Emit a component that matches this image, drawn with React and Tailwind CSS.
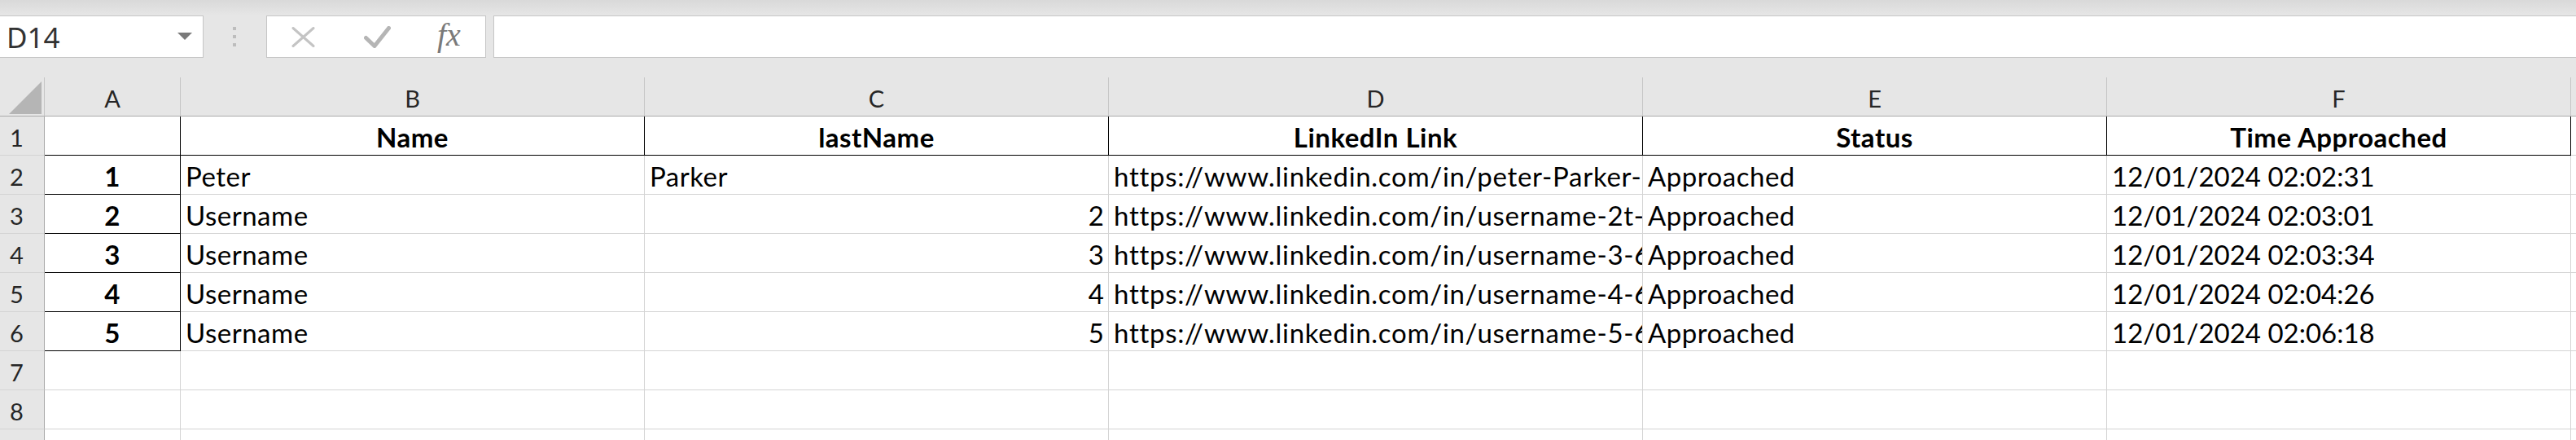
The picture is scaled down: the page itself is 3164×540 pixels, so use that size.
import React from "react";

const GRID = "grid grid-cols-[55px_167px_570px_570px_656px_570px_570px_1fr]";
const LETTERS = ["A", "B", "C", "D", "E", "F"];

const rows = [
  [
    { t: "", br: true, bb: true },
    { t: "Name", bold: true, align: "center", br: true, bb: true },
    { t: "lastName", bold: true, align: "center", br: true, bb: true },
    { t: "LinkedIn Link", bold: true, align: "center", br: true, bb: true },
    { t: "Status", bold: true, align: "center", br: true, bb: true },
    { t: "Time Approached", bold: true, align: "center", br: true, bb: true },
  ],
  [
    { t: "1", bold: true, align: "center", br: true, bb: true },
    { t: "Peter" },
    { t: "Parker" },
    { t: "https://www.linkedin.com/in/peter-Parker-a1b2c3d4e5/", wide: true },
    { t: "Approached" },
    { t: "12/01/2024 02:02:31", num: true },
  ],
  [
    { t: "2", bold: true, align: "center", br: true, bb: true },
    { t: "Username" },
    { t: "2", align: "right", num: true },
    { t: "https://www.linkedin.com/in/username-2t-6a7b8c9d/", wide: true },
    { t: "Approached" },
    { t: "12/01/2024 02:03:01", num: true },
  ],
  [
    { t: "3", bold: true, align: "center", br: true, bb: true },
    { t: "Username" },
    { t: "3", align: "right", num: true },
    { t: "https://www.linkedin.com/in/username-3-6b1c2d3e/", wide: true },
    { t: "Approached" },
    { t: "12/01/2024 02:03:34", num: true },
  ],
  [
    { t: "4", bold: true, align: "center", br: true, bb: true },
    { t: "Username" },
    { t: "4", align: "right", num: true },
    { t: "https://www.linkedin.com/in/username-4-6c2d3e4f/", wide: true },
    { t: "Approached" },
    { t: "12/01/2024 02:04:26", num: true },
  ],
  [
    { t: "5", bold: true, align: "center", br: true, bb: true },
    { t: "Username" },
    { t: "5", align: "right", num: true },
    { t: "https://www.linkedin.com/in/username-5-6d3e4f5a/", wide: true },
    { t: "Approached" },
    { t: "12/01/2024 02:06:18", num: true },
  ],
  [{}, {}, {}, {}, {}, {}],
  [{}, {}, {}, {}, {}, {}],
  [{}, {}, {}, {}, {}, {}],
];

function FormulaBar() {
  return (
    <div className="h-[95px]">
      <div className="h-[19px] bg-linear-to-b from-[#d9d9d9] to-[#e6e6e6]" />
      <div className="flex h-[52px] items-stretch">
        {/* name box */}
        <div className="relative flex w-[250px] items-center border border-l-0 border-[#c6c6c6] bg-white pl-[8px]">
          <span className="font-['Noto_Sans',sans-serif] text-[35px] leading-none text-[#333]">
            D14
          </span>
          <svg
            className="absolute left-[218px] top-[20px]"
            width="18"
            height="9"
            viewBox="0 0 18 9"
          >
            <path d="M0 0 H18 L9 9 Z" fill="#7a7a7a" />
          </svg>
        </div>

        {/* grip dots */}
        <div className="flex w-[77px] flex-col items-center justify-center gap-[6px] pr-[2px]">
          <span className="h-[4px] w-[4px] bg-[#bdbdbd]" />
          <span className="h-[4px] w-[4px] bg-[#bdbdbd]" />
          <span className="h-[4px] w-[4px] bg-[#bdbdbd]" />
        </div>

        {/* cancel / enter / fx */}
        <div className="flex w-[270px] items-center border border-[#c6c6c6] bg-white">
          <svg className="ml-[30px]" width="29" height="25" viewBox="0 0 29 25">
            <path
              d="M2 1.5 L27 23.5 M27 1.5 L2 23.5"
              stroke="#c4c4c4"
              strokeWidth="3"
              strokeLinecap="round"
              fill="none"
            />
          </svg>
          <svg className="ml-[60px]" width="33" height="27" viewBox="0 0 33 27">
            <path
              d="M2.5 14.5 L13 24.5 L30.5 2.5"
              stroke="#b5b5b5"
              strokeWidth="5"
              strokeLinecap="round"
              strokeLinejoin="round"
              fill="none"
            />
          </svg>
          <span className="ml-[57px] mt-[-4px] font-['Liberation_Serif',serif] text-[40px] italic leading-none text-[#7a7a7a]">
            fx
          </span>
        </div>

        {/* formula input */}
        <div className="ml-[9px] flex-1 border border-r-0 border-[#c6c6c6] bg-white" />
      </div>
      <div className="h-[24px]" />
    </div>
  );
}

function HeaderRow() {
  return (
    <div className={`${GRID} h-[48px]`}>
      <div className="relative border-r border-b border-[#ababab] border-r-[#c6c6c6]">
        <svg className="absolute left-[11px] top-[5px]" width="40" height="40" viewBox="0 0 40 40">
          <path d="M0 40 H40 V0 Z" fill="#b5b5b5" />
        </svg>
      </div>
      {LETTERS.map((l) => (
        <div
          key={l}
          className="flex items-end justify-center border-r border-b border-r-[#c6c6c6] border-b-[#ababab] pb-[3px] text-[29px] leading-[36px] text-[#262626]"
        >
          {l}
        </div>
      ))}
      <div className="border-b border-[#ababab]" />
    </div>
  );
}

function Cell({ cell }) {
  const align =
    cell.align === "center"
      ? "justify-center"
      : cell.align === "right"
      ? "justify-end pr-[5px]"
      : "justify-start pl-[6px]";
  const track = cell.num ? "" : cell.wide ? "tracking-[0.7px]" : "tracking-[0.5px]";
  return (
    <div
      className={`flex items-end overflow-hidden whitespace-nowrap border-r border-b bg-white pb-[2px] text-[33px] leading-[40px] text-black ${align} ${track} ${
        cell.bold ? "font-bold" : ""
      } ${cell.br ? "border-r-black" : "border-r-[#d4d4d4]"} ${
        cell.bb ? "border-b-black" : "border-b-[#d4d4d4]"
      }`}
    >
      {cell.t}
    </div>
  );
}

export default function App() {
  return (
    <div className="h-[540px] w-full overflow-hidden bg-[#e6e6e6] font-['Lato',sans-serif]">
      <FormulaBar />
      <HeaderRow />
      {rows.map((r, i) => (
        <div key={i} className={`${GRID} h-[48px]`}>
          <div className="flex items-end border-r border-b border-r-[#ababab] border-b-[#d4d4d4] bg-[#e6e6e6] pb-[3px] pl-[12px] text-[29px] leading-[36px] text-[#262626]">
            {i + 1}
          </div>
          {r.map((c, j) => (
            <Cell key={j} cell={c} />
          ))}
          <div className="border-b border-[#d4d4d4] bg-white" />
        </div>
      ))}
    </div>
  );
}
